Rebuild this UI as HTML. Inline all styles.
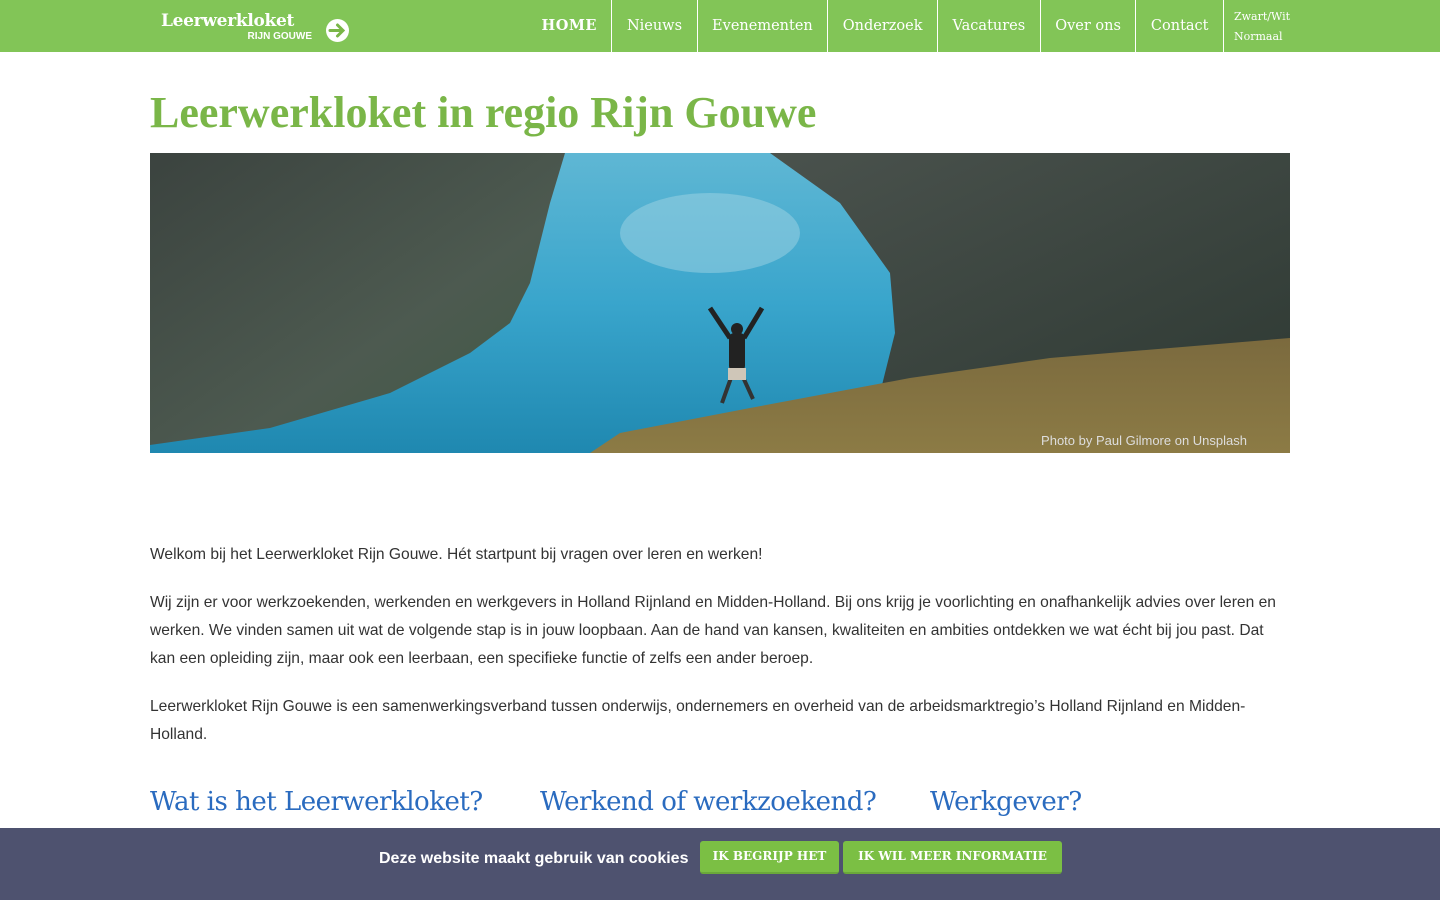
<!DOCTYPE html>
<html><head><meta charset="utf-8"><style>
*{margin:0;padding:0;box-sizing:border-box}
body{width:1440px;height:900px;overflow:hidden;background:#fff;font-family:"Liberation Sans",sans-serif;color:#333;position:relative}
.top{position:absolute;left:0;top:0;width:1440px;height:52px;background:#82c557}
.logo{position:absolute;left:161px;top:11px;color:#fff;width:155px;white-space:nowrap}
.logo .a{font-family:"DejaVu Serif","Liberation Serif",serif;font-weight:bold;font-size:17px;letter-spacing:-0.3px}
.logo .b{position:absolute;right:4px;top:20px;font-size:10px;font-weight:bold}
.arrow{position:absolute;left:325px;top:19px}
.nav{position:absolute;left:527px;top:0;height:52px;display:flex;font-family:"DejaVu Serif","Liberation Serif",serif;color:#fff;font-size:14.5px;white-space:nowrap}
.nav div{height:52px;line-height:52px;padding:0 14.5px;border-left:1.5px solid #fff}
.nav div:first-child{border-left:none;font-weight:bold;letter-spacing:.5px}
.nav .sm{font-size:11px;line-height:20px;padding:7px 10px 0 10px}
h1{position:absolute;left:150px;top:87px;font-family:"Liberation Serif","DejaVu Serif",serif;font-weight:bold;font-size:44px;color:#7ab648;letter-spacing:0px}
.img{position:absolute;left:150px;top:153px}
.p{position:absolute;left:150px;font-size:15.6px;line-height:28px;color:#333;white-space:nowrap}
h2{position:absolute;top:787px;font-family:"DejaVu Serif","Liberation Serif",serif;font-weight:normal;font-size:26px;color:#2a6bbf;letter-spacing:-0.5px}
.ck{position:absolute;left:0;top:828px;width:1440px;height:72px;background:#4e526f}
.ck .t{position:absolute;left:379px;top:22px;color:#fff;font-weight:bold;font-size:16px}
.btn{position:absolute;top:13px;height:33px;background:#7bbf44;color:#fff;border-radius:3px;font-family:"DejaVu Serif",serif;font-weight:bold;font-size:12px;line-height:31px;text-align:center;letter-spacing:0;border-bottom:2px solid #6aa83a;white-space:nowrap}
</style></head><body>
<div class="top">
 <div class="logo"><div class="a">Leerwerkloket</div><div class="b">RIJN GOUWE</div></div>
 <svg class="arrow" width="25" height="23" viewBox="0 0 25 23"><circle cx="12.5" cy="11.5" r="11.5" fill="#fff"/><path d="M5 11.5h13M12.5 6l5.5 5.5-5.5 5.5" stroke="#7ab648" stroke-width="3" fill="none" stroke-linecap="round"/></svg>
 <div class="nav"><div>HOME</div><div>Nieuws</div><div>Evenementen</div><div>Onderzoek</div><div>Vacatures</div><div>Over ons</div><div>Contact</div><div class="sm">Zwart/Wit<br>Normaal</div></div>
</div>
<h1>Leerwerkloket in regio Rijn Gouwe</h1>
<svg class="img" width="1140" height="300" viewBox="0 0 1140 300">
<defs>
<linearGradient id="lake" x1="0" y1="0" x2="0" y2="1"><stop offset="0" stop-color="#5fb7d4"/><stop offset=".5" stop-color="#39a5cc"/><stop offset="1" stop-color="#1f88b0"/></linearGradient>
<linearGradient id="lm" x1="0" y1="0" x2="1" y2="1"><stop offset="0" stop-color="#3b433f"/><stop offset=".6" stop-color="#4d5a50"/><stop offset="1" stop-color="#3e5a44"/></linearGradient>
<linearGradient id="rm" x1="0" y1="0" x2="1" y2="1"><stop offset="0" stop-color="#4a524d"/><stop offset="1" stop-color="#2f3a34"/></linearGradient>
<linearGradient id="gr" x1="0" y1="0" x2="0" y2="1"><stop offset="0" stop-color="#7b6a3e"/><stop offset="1" stop-color="#8c7b45"/></linearGradient>
</defs>
<rect width="1140" height="300" fill="url(#lake)"/>
<ellipse cx="560" cy="80" rx="90" ry="40" fill="#9fd3e4" opacity=".5"/>
<path d="M0 0H415L400 50 380 130 360 170 320 200 240 240 120 275 0 292Z" fill="url(#lm)"/>
<path d="M620 0H1140V190L900 215 760 245 730 240 745 180 740 120 690 50Z" fill="url(#rm)"/>
<path d="M440 300L470 280 600 255 760 225 900 205 1140 185V300Z" fill="url(#gr)"/>
<g fill="#222"><rect x="579" y="180" width="16" height="38" rx="5"/><circle cx="587" cy="176" r="6"/><path d="M580 185L560 155M594 185L612 155" stroke="#222" stroke-width="5"/><path d="M582 222L572 250M592 222L603 246" stroke="#333" stroke-width="4"/></g>
<rect x="578" y="215" width="18" height="12" fill="#cfc6b8"/>
<text x="1097" y="292" text-anchor="end" font-size="13" fill="#ddd" font-family="Liberation Sans">Photo by Paul Gilmore on Unsplash</text>
</svg>
<div class="p" style="top:541px">Welkom bij het Leerwerkloket Rijn Gouwe. Hét startpunt bij vragen over leren en werken!</div>
<div class="p" style="top:589px">Wij zijn er voor werkzoekenden, werkenden en werkgevers in Holland Rijnland en Midden-Holland. Bij ons krijg je voorlichting en onafhankelijk advies over leren en<br>werken. We vinden samen uit wat de volgende stap is in jouw loopbaan. Aan de hand van kansen, kwaliteiten en ambities ontdekken we wat écht bij jou past. Dat<br>kan een opleiding zijn, maar ook een leerbaan, een specifieke functie of zelfs een ander beroep.</div>
<div class="p" style="top:693px">Leerwerkloket Rijn Gouwe is een samenwerkingsverband tussen onderwijs, ondernemers en overheid van de arbeidsmarktregio’s Holland Rijnland en Midden-<br>Holland.</div>
<h2 style="left:150px">Wat is het Leerwerkloket?</h2>
<h2 style="left:540px">Werkend of werkzoekend?</h2>
<h2 style="left:930px">Werkgever?</h2>
<div class="ck"><div class="t">Deze website maakt gebruik van cookies</div>
<div class="btn" style="left:700px;width:139px">IK BEGRIJP HET</div>
<div class="btn" style="left:843px;width:219px">IK WIL MEER INFORMATIE</div></div>
</body></html>
